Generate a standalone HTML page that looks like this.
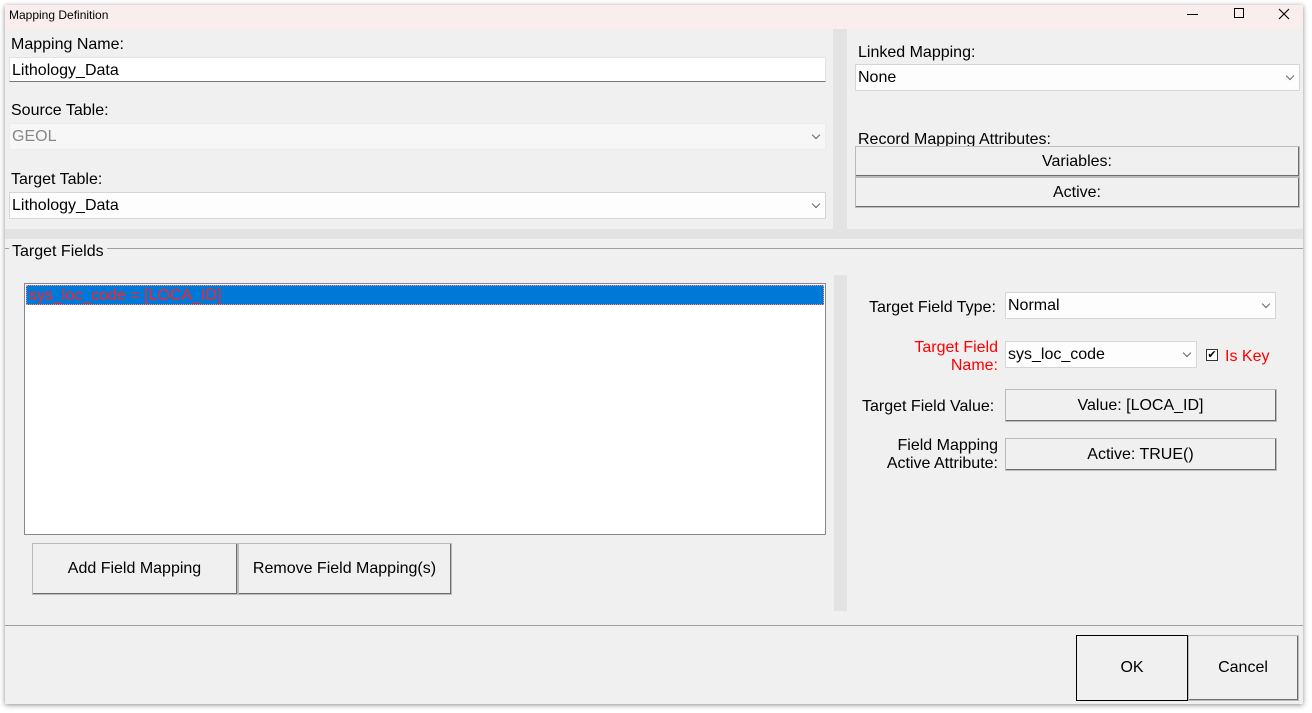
<!DOCTYPE html>
<html><head><meta charset="utf-8"><style>
*{margin:0;padding:0;box-sizing:border-box}
body{width:1312px;height:713px;background:#fff;position:relative;overflow:hidden;font-family:"Liberation Sans",sans-serif;font-size:16px;color:#000}
.a{position:absolute}
.win{left:5px;top:5px;width:1298px;height:699px;background:#f0f0f0;box-shadow:0 1px 5px rgba(0,0,0,.45)}
.lbl{position:absolute;white-space:nowrap}
.inp{position:absolute;background:#fff;border:1px solid #e3e3e3;padding-left:2px;line-height:26px}
.cb{position:absolute;background:#fdfdfd;border:1px solid #d6d6d6;padding-left:2px;line-height:26px}
.cb:after{content:"";position:absolute;right:6px;top:8px;width:5px;height:5px;border-right:1px solid #666;border-bottom:1px solid #666;transform:rotate(45deg)}
.btn{position:absolute;background:#f0f0f0;border:1px solid #fff;border-right:2px solid #6d6d6d;border-bottom:2px solid #6d6d6d;text-align:center;outline:1px solid #bbb;outline-offset:-1px}
</style></head><body>
<div class="a win"></div>
<div class="a" style="left:5px;top:5px;width:1298px;height:24px;background:#f9eeed"></div>
<div class="lbl" style="left:9px;top:8px;font-size:12px">Mapping Definition</div>
<div class="a" style="left:1187px;top:14px;width:11px;height:1px;background:#000"></div>
<div class="a" style="left:1234px;top:8px;width:10px;height:10px;border:1px solid #000"></div>
<svg class="a" style="left:1278px;top:8px" width="12" height="12"><path d="M1 1L11 11M11 1L1 11" stroke="#000" stroke-width="1.1"/></svg>

<div class="a" style="left:833px;top:29px;width:14px;height:200px;background:#e3e3e3"></div>
<div class="a" style="left:5px;top:229px;width:1298px;height:10px;background:#e3e3e3"></div>

<div class="lbl" style="left:11px;top:36px">Mapping Name:</div>
<div class="inp" style="left:9px;top:57px;width:817px;height:25px;border-bottom:1px solid #777">Lithology_Data</div>
<div class="lbl" style="left:11px;top:102px">Source Table:</div>
<div class="cb" style="left:9px;top:123px;width:817px;height:27px;color:#888;background:#f7f7f7;border-color:#ececec">GEOL</div>
<div class="lbl" style="left:11px;top:171px">Target Table:</div>
<div class="cb" style="left:9px;top:192px;width:817px;height:27px">Lithology_Data</div>

<div class="lbl" style="left:858px;top:44px">Linked Mapping:</div>
<div class="cb" style="left:855px;top:64px;width:445px;height:27px">None</div>
<div class="lbl" style="left:858px;top:131px">Record Mapping Attributes:</div>
<div class="btn" style="left:855px;top:146px;width:445px;height:31px;line-height:29px">Variables:</div>
<div class="btn" style="left:855px;top:177px;width:445px;height:31px;line-height:29px">Active:</div>

<div class="a" style="left:5px;top:248px;width:1298px;height:1px;background:#a0a0a0"></div>
<div class="lbl" style="left:9px;top:243px;background:#f0f0f0;padding:0 3px">Target Fields</div>

<div class="a" style="left:24px;top:283px;width:802px;height:252px;background:#fff;border:1px solid #828790"></div>
<div class="a" style="left:26px;top:285px;width:798px;height:20px;background:#0078d7;color:#f22;line-height:22px;padding-left:3px;outline:1px dotted #f88;outline-offset:-1px">sys_loc_code = [LOCA_ID]</div>

<div class="btn" style="left:32px;top:543px;width:206px;height:52px;line-height:50px">Add Field Mapping</div>
<div class="btn" style="left:238px;top:543px;width:214px;height:52px;line-height:50px">Remove Field Mapping(s)</div>

<div class="a" style="left:834px;top:275px;width:13px;height:336px;background:#e3e3e3"></div>

<div class="lbl" style="left:869px;top:299px">Target Field Type:</div>
<div class="cb" style="left:1005px;top:292px;width:271px;height:27px">Normal</div>
<div class="lbl" style="left:900px;top:339px;color:#f00;text-align:right;line-height:18px;width:98px">Target Field<br>Name:</div>
<div class="cb" style="left:1005px;top:341px;width:192px;height:27px">sys_loc_code</div>
<div class="a" style="left:1206px;top:349px;width:12px;height:12px;border:1px solid #333;background:#fff;font-size:11px;line-height:10px;text-align:center">✔</div>
<div class="lbl" style="left:1225px;top:348px;color:#f00">Is Key</div>
<div class="lbl" style="left:862px;top:398px">Target Field Value:</div>
<div class="btn" style="left:1005px;top:389px;width:272px;height:33px;line-height:31px">Value: [LOCA_ID]</div>
<div class="lbl" style="left:880px;top:437px;text-align:right;line-height:18px;width:118px">Field Mapping<br>Active Attribute:</div>
<div class="btn" style="left:1005px;top:438px;width:272px;height:33px;line-height:31px">Active: TRUE()</div>

<div class="a" style="left:5px;top:625px;width:1298px;height:1px;background:#a0a0a0"></div>
<div class="btn" style="left:1076px;top:635px;width:112px;height:66px;line-height:64px;border:1px solid #000;outline:none">OK</div>
<div class="btn" style="left:1188px;top:635px;width:111px;height:66px;line-height:64px">Cancel</div>
</body></html>
